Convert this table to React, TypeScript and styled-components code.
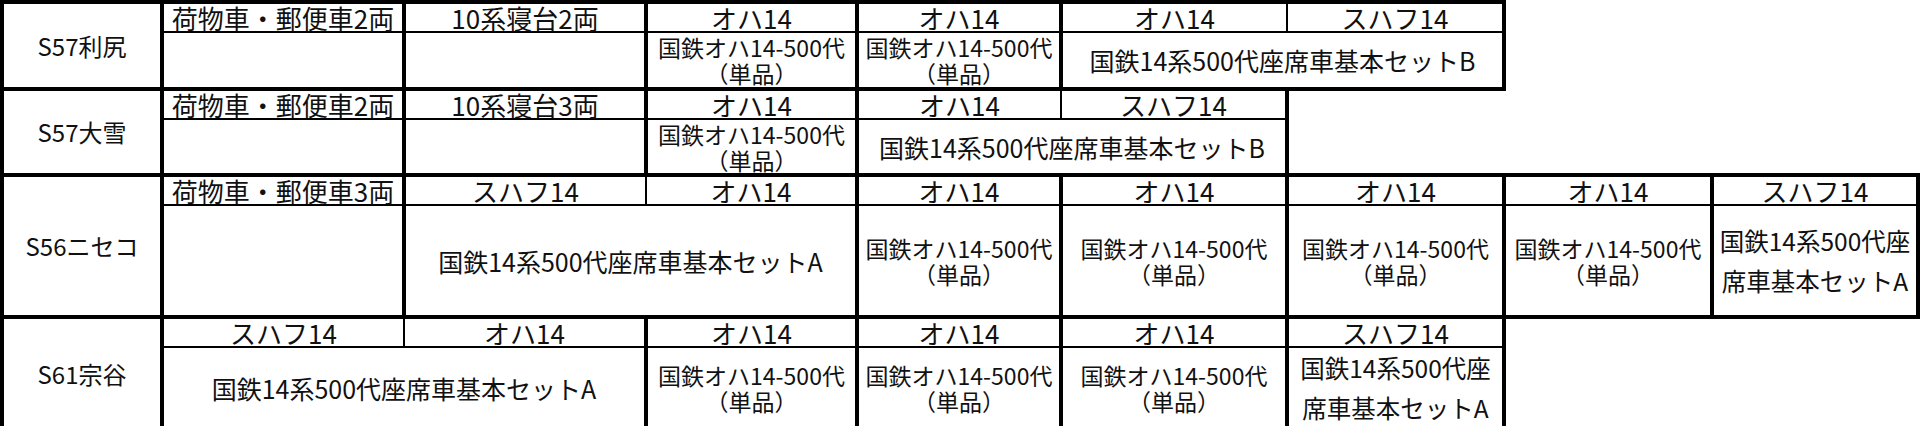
import styled, { createGlobalStyle } from 'styled-components';

const GlobalStyle = createGlobalStyle`
  html, body {
    margin: 0;
    padding: 0;
    background: #ffffff;
  }
  body {
    font-family: "Noto Sans CJK JP", "Noto Sans", sans-serif;
    color: #111111;
  }
`;

// column widths, measured line centre to line centre
const COLS = [160, 242, 242, 211, 204, 226, 217, 208, 206];

type Group = {
    cars: string[];
    item: string[];
    kind?: 'single' | 'set' | 'wrap';
};

type Train = {
    name: string;
    bodyHeight: number;
    groups: Group[];
};

const EMPTY: string[] = [];
const SINGLE = ['国鉄オハ14-500代', '（単品）'];
const SET_A = ['国鉄14系500代座席車基本セットA'];
const SET_B = ['国鉄14系500代座席車基本セットB'];
const SET_A_WRAP = ['国鉄14系500代座', '席車基本セットA'];

const TRAINS: Train[] = [
    {
        name: 'S57利尻',
        bodyHeight: 57,
        groups: [
            { cars: ['荷物車・郵便車2両'], item: EMPTY },
            { cars: ['10系寝台2両'], item: EMPTY },
            { cars: ['オハ14'], item: SINGLE },
            { cars: ['オハ14'], item: SINGLE },
            { cars: ['オハ14', 'スハフ14'], item: SET_B, kind: 'set' },
        ],
    },
    {
        name: 'S57大雪',
        bodyHeight: 56,
        groups: [
            { cars: ['荷物車・郵便車2両'], item: EMPTY },
            { cars: ['10系寝台3両'], item: EMPTY },
            { cars: ['オハ14'], item: SINGLE },
            { cars: ['オハ14', 'スハフ14'], item: SET_B, kind: 'set' },
        ],
    },
    {
        name: 'S56ニセコ',
        bodyHeight: 112,
        groups: [
            { cars: ['荷物車・郵便車3両'], item: EMPTY },
            { cars: ['スハフ14', 'オハ14'], item: SET_A, kind: 'set' },
            { cars: ['オハ14'], item: SINGLE },
            { cars: ['オハ14'], item: SINGLE },
            { cars: ['オハ14'], item: SINGLE },
            { cars: ['オハ14'], item: SINGLE },
            { cars: ['スハフ14'], item: SET_A_WRAP, kind: 'wrap' },
        ],
    },
    {
        name: 'S61宗谷',
        bodyHeight: 76,
        groups: [
            { cars: ['スハフ14', 'オハ14'], item: SET_A, kind: 'set' },
            { cars: ['オハ14'], item: SINGLE },
            { cars: ['オハ14'], item: SINGLE },
            { cars: ['オハ14'], item: SINGLE },
            { cars: ['スハフ14'], item: SET_A_WRAP, kind: 'wrap' },
        ],
    },
];

const Sheet = styled.table`
    border-collapse: collapse;
    table-layout: fixed;
    width: ${COLS.reduce((a, b) => a + b, 0)}px;
    margin: 0;

    td {
        box-sizing: border-box;
        padding: 0;
        text-align: center;
        vertical-align: middle;
        white-space: nowrap;
        overflow: visible;
    }
`;

const Col = styled.col<{ $w: number }>`
    width: ${p => p.$w}px;
`;

const TrainCell = styled.td`
    border: 4px solid #000;
    font-size: 24px;
    line-height: 28px;
`;

const CarCell = styled.td<{ $first: boolean; $last: boolean }>`
    height: 30px;
    border-top: 4px solid #000;
    border-bottom: 2px solid #000;
    border-left: ${p => (p.$first ? 4 : 2)}px solid #000;
    border-right: ${p => (p.$last ? 4 : 2)}px solid #000;
    font-size: 26px;
    line-height: 26px;
`;

const ItemCell = styled.td<{ $h: number; $kind: string }>`
    height: ${p => p.$h}px;
    border: 4px solid #000;
    border-top-width: 2px;
    font-size: ${p => (p.$kind === 'set' ? 25 : p.$kind === 'wrap' ? 24.5 : 23)}px;
    line-height: ${p => (p.$kind === 'wrap' ? 40 : 26)}px;
`;

const ItemLine = styled.div`
    display: block;
`;

const TrainRows = ({ train }: { train: Train }) => (
    <>
        <tr>
            <TrainCell rowSpan={2}>{train.name}</TrainCell>
            {train.groups.map((g, gi) =>
                g.cars.map((car, ci) => (
                    <CarCell key={`${gi}-${ci}`} $first={ci === 0} $last={ci === g.cars.length - 1}>
                        {car}
                    </CarCell>
                ))
            )}
        </tr>
        <tr>
            {train.groups.map((g, gi) => (
                <ItemCell key={gi} colSpan={g.cars.length} $h={train.bodyHeight} $kind={g.kind ?? 'single'}>
                    {g.item.map((line, li) => (
                        <ItemLine key={li}>{line}</ItemLine>
                    ))}
                </ItemCell>
            ))}
        </tr>
    </>
);

const App = () => (
    <>
        <GlobalStyle />
        <Sheet>
            <colgroup>
                {COLS.map((w, i) => (
                    <Col key={i} $w={w} />
                ))}
            </colgroup>
            <tbody>
                {TRAINS.map(t => (
                    <TrainRows key={t.name} train={t} />
                ))}
            </tbody>
        </Sheet>
    </>
);

export default App;
